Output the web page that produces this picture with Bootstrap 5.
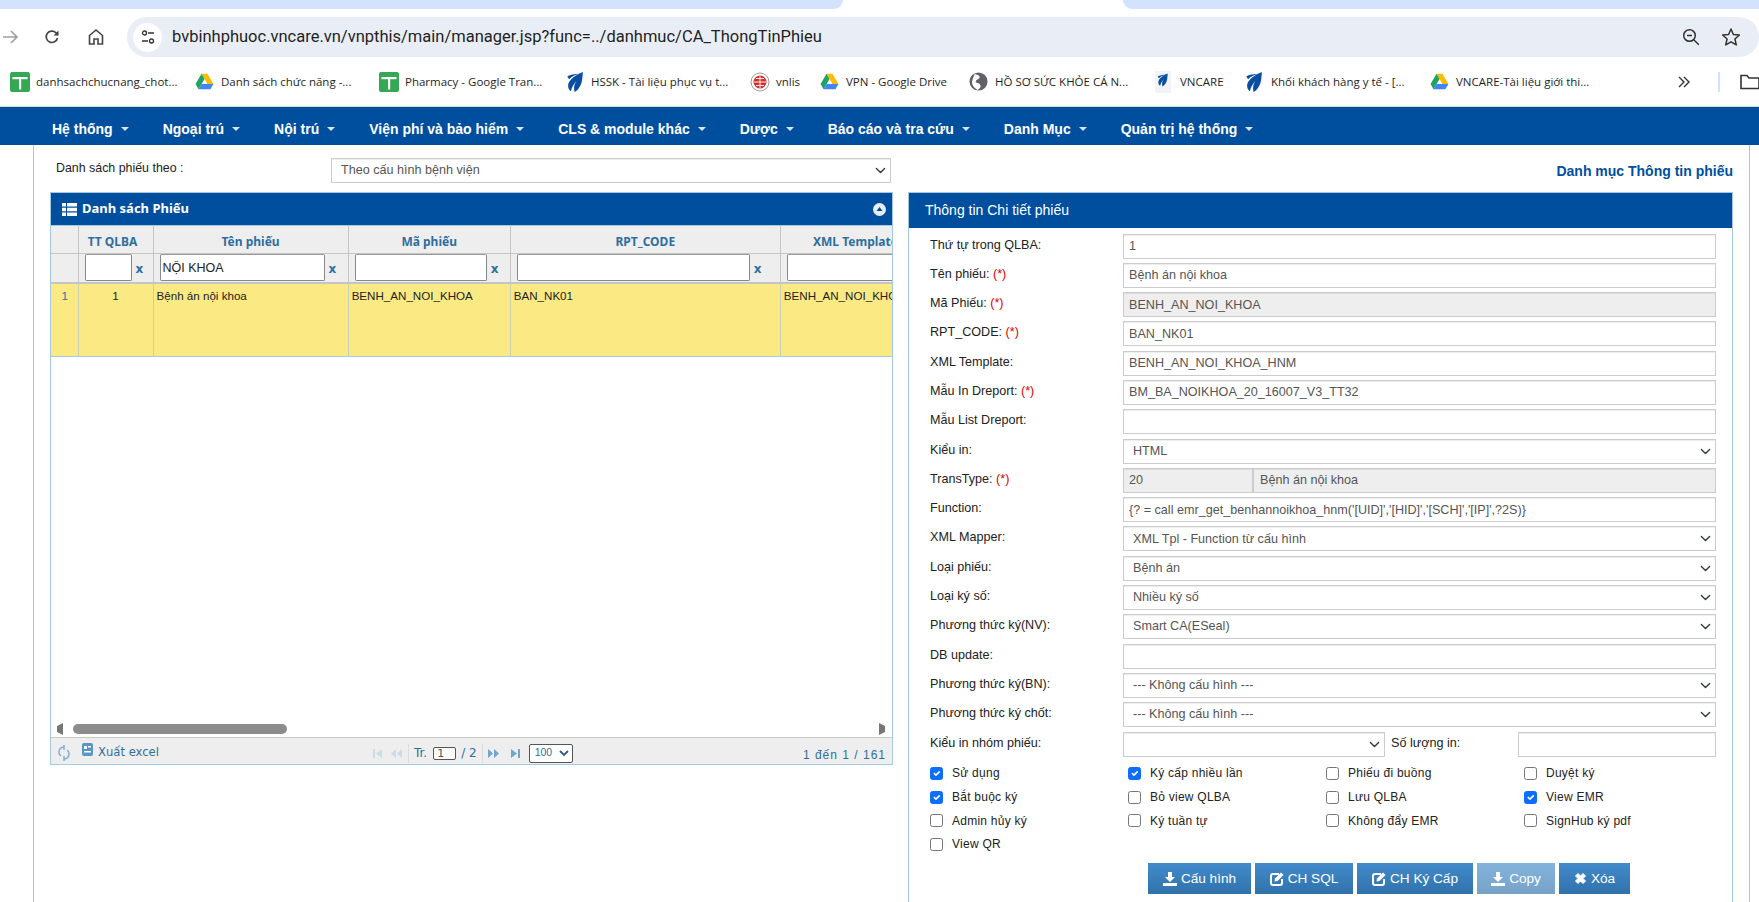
<!DOCTYPE html>
<html lang="vi">
<head>
<meta charset="utf-8">
<title>CA_ThongTinPhieu</title>
<link href="https://cdn.jsdelivr.net/npm/bootstrap@5.3.0/dist/css/bootstrap.min.css" rel="stylesheet">
<style>
html,body{height:902px;overflow:hidden;background:#fff}
body{font-family:"Liberation Sans",Arial,sans-serif;font-size:12px;color:#222}
.tabstrip-left{width:843px;background:#d3e3fd;border-radius:0 0 12px 0;height:9px}
.tabstrip-mid{width:280px;background:#fff;height:9px}
.tabstrip-right{flex:1;background:#d3e3fd;border-radius:0 0 0 12px;height:9px}
.tabwrap{display:flex;height:9px;background:#fff}
.toolbar{height:48px;display:flex;align-items:flex-end;background:#fff}
.tool-ic{flex:none;display:flex;align-items:center;justify-content:center;height:40px}
.omni{flex:1;height:40px;margin-left:20px;background:#e9eef6;border-radius:20px;display:flex;align-items:center;padding:0 7px 0 6px;font-family:Roboto,"Liberation Sans",sans-serif;font-size:16.5px;color:#1f1f1f}
.omni-tune{width:29px;height:29px;background:#fff;border-radius:50%;display:flex;align-items:center;justify-content:center;margin-right:10px}
.bmbar{height:50px;display:flex;align-items:center;background:#fff;border-bottom:1px solid #d5d5d5;font-family:"Open Sans",Roboto,sans-serif;font-size:11.5px;color:#1f1f1f;white-space:nowrap;padding-left:10px}
.bmk{display:flex;align-items:center;flex:none}
.bmk svg{flex:none}
.bmk span{margin-left:6px;display:block}
.bmend{margin-left:auto;display:flex;align-items:center}
.topnav{height:38px;background:#004f9f;padding:6px 0 0 34px;flex-wrap:nowrap;justify-content:flex-start}
.topnav .navbar-nav .nav-link{color:#fff;font-weight:700;font-size:14px;padding:0 16.500px 0 17.500px;display:flex;align-items:center;white-space:nowrap}
.topnav .navbar-nav .nav-item:first-child .nav-link{padding-left:18px}
.nav-caret{display:inline-block;width:0;height:0;border-left:4px solid transparent;border-right:4px solid transparent;border-top:4px solid #fff;margin-left:8px;opacity:.85}
.pagebox{margin:0 9px 0 33px;height:757px;border-left:1px solid #a6c9e2;border-right:1px solid #a6c9e2;padding-top:13px;display:flex;gap:15px;overflow:hidden}
.leftcol{width:843px;margin-left:16px;flex:none}
.rightcol{width:825px;flex:none}
.filterbar{display:flex;height:25px;margin-bottom:9px;padding-right:2px}
.filterbar label{width:281px;padding:1px 0 0 6px;line-height:19px;flex:none;color:#222;font-size:12.400px}
.sel{height:25px;border:1px solid #ccc;border-radius:0;font-size:12.600px;padding:0 24px 0 9px;color:#555;background-position:right 3px center;background-size:13px 11px;box-shadow:inset 0 1px 1px rgba(0,0,0,.075);font-family:"Liberation Sans",sans-serif}
.inp{height:25px;border:1px solid #ccc;border-radius:0;font-size:12.600px;padding:0 5px;color:#555;box-shadow:inset 0 1px 1px rgba(0,0,0,.075);font-family:"Liberation Sans",sans-serif}
.inp:disabled,.inp[readonly]{background:#eee;opacity:1}
.gridpanel{height:573px;border:1px solid #a6c9e2;display:flex;flex-direction:column;overflow:hidden}
.phead{height:32px;background:#004f9f;color:#fff;display:flex;align-items:center;flex:none;font-size:13px;font-weight:700;padding:0 6px 0 11px;font-family:"Noto Sans","Liberation Sans",sans-serif}
.phead svg{margin-right:5px}
.gridview{flex:1;overflow:hidden;background:#fff;position:relative}
.gridtbl{table-layout:fixed;width:880px;border-collapse:collapse;margin:0;font-size:11.600px}
.gridtbl th,.gridtbl td{border:1px solid #c5c5c5;border-width:0 1px 0 0;padding:0;overflow:hidden;white-space:nowrap}
.gridtbl thead tr.hrow th{height:28px;padding-bottom:2px;background:#eee;color:#2e6e9e;font-weight:700;text-align:center;border-top:1px solid #a6c9e2;border-bottom:1px solid #c5c5c5;font-family:"Noto Sans","Liberation Sans",sans-serif;font-size:12px}
.gridtbl thead tr.hrow th:nth-child(2){padding-right:6px}
.gridtbl thead tr.frow th{height:29px;background:#eee;font-weight:400;border-bottom:2px solid #c5c5c5}
.filtcell{display:flex;align-items:flex-start;padding:0 0 0 6px;color:#2e6e9e;font-weight:700;font-size:12.500px;height:28px}
.filtcell input{min-width:0;height:27px;border:1px solid #888;border-top-color:#999;border-width:1px 1.500px 1.500px 1.500px;padding:0 2px;font-size:12.500px;color:#222;background:#fff;font-family:"Liberation Sans",sans-serif;border-radius:2px}
.filtcell b{flex:1;text-align:left;padding-left:4px;line-height:30px;font-family:"DejaVu Sans",sans-serif;font-size:12px}
.gridtbl .frow th:nth-child(2) input{width:47px}
.gridtbl .frow th:nth-child(3) input{width:165px}
.gridtbl .frow th:nth-child(4) input{width:132px}
.gridtbl .frow th:nth-child(5) input{width:233px}
.gridtbl .frow th:nth-child(6) input{width:140px}
.gridtbl tbody td{height:73px;background:#fbe983;color:#222;vertical-align:top;padding:3px 3px;border-bottom:1px solid #a6c9e2;border-right-color:#c8d0b8}
.gridtbl tbody td.rn{color:#2e6e9e;text-align:center;padding-left:4px}
.gridtbl tbody td.ct{text-align:center}
.hscroll{height:15px;flex:none;display:flex;align-items:center;padding:0 6px 2px 5px;background:#fff;gap:9px}
.hthumb{width:214px;height:10px;border-radius:5px;background:#8c8c8c}
.hspacer{flex:1}
.pfoot{height:27px;flex:none;background:#eee;border-top:1px solid #c8c8c8;display:flex;align-items:center;padding:4px 6px 0 7px;color:#2e6e9e;font-family:"DejaVu Sans",sans-serif;font-size:11px}
.pfoot .xl{margin-left:5px;font-size:11.600px}
.pager{margin-left:212px;display:flex;align-items:center;gap:3px;font-size:12px}
.pager .pginp{width:23px;height:13px;border:1px solid #555;border-radius:2px;background:#fff;color:#555;font-size:11px;line-height:11px;padding-left:3px;margin:0 2px 0 3px}
.pager .pgsel{height:19px;width:44px;border:1px solid #555;border-radius:2px;background:#fff;color:#2e6e9e;display:flex;align-items:center;justify-content:space-between;padding:0 3px 0 5px;font-size:10.500px;margin-left:5px;font-family:"Liberation Sans",sans-serif}
.pager .vsep{width:1px;height:19px;background:#dcdcdc;margin:0 2px}
.recs{margin-left:auto;font-size:12px;letter-spacing:1px;font-family:"Liberation Sans",sans-serif;padding-top:3px}
.titlebar{height:25px;margin-bottom:9px;text-align:right;font-weight:700;color:#004f9f;font-size:14px;line-height:27px}
.detailpanel{height:740px;border:1px solid #a6c9e2;display:flex;flex-direction:column}
.dhead{height:35px;background:#004f9f;color:#fff;font-size:14px;display:flex;align-items:center;padding-left:16px;flex:none}
.formgrid{padding:5.500px 16px 0 21px;display:grid;grid-template-columns:193px 1fr;row-gap:4.300px;align-items:start}
.formgrid label{line-height:23px;color:#222;height:25px;font-size:12.600px}
.req{color:#e00000}
.dual{display:flex}
.dual .inp:first-child{width:131px;flex:none;border-right-width:2px}
.dual .inp:last-child{flex:1;min-width:0;padding-left:6px;border-left:0}
.nums{display:flex;align-items:flex-start}
.nums .form-select{width:262px;flex:none}
.nums label{width:133px;flex:none;padding-left:6px}
.checks{padding:5px 0 0 21px;display:grid;grid-template-columns:repeat(4,198px);grid-auto-rows:23.700px;align-items:center}
.checks .chk{display:flex;align-items:center;margin:0;padding:0;min-height:0;letter-spacing:.25px;color:#222}
.checks .chk .form-check-input{width:13px;height:13px;margin:0 9px 0 0;float:none;border-color:#767676;border-radius:2.500px;flex:none}
.checks .chk .form-check-input:checked{border-color:#0d6efd}
.actions{display:flex;gap:4px;padding-left:239px;margin-top:7px}
.actbtn{height:31px;border-radius:0;border:0;background:linear-gradient(#428bca,#3072ab);color:#fff;font-size:13.600px;padding:0;display:flex;align-items:center;justify-content:center;gap:4px}
.actbtn:disabled{opacity:.65;background:linear-gradient(#428bca,#3072ab);color:#fff}
.w1{width:103px}.w2{width:98px}.w3{width:116px}.w4{width:78px}.w5{width:71px}
</style>
</head>
<body>
<svg width="0" height="0" class="d-block" style="position:absolute">
<defs>
<symbol id="sheet" viewBox="0 0 20 20"><rect width="20" height="20" rx="2" fill="#34a853"/><rect x="2.500" y="5" width="15" height="2.200" fill="#fff"/><rect x="9" y="5" width="2.200" height="12.500" fill="#fff"/></symbol>
<symbol id="drive" viewBox="0 0 22 20"><path d="M7.500 1h7l7 12h-7z" fill="#fbbc04"/><path d="M7.500 1 .5 13l3.500 6 7-12z" fill="#1ea362"/><path d="M4 19l3.500-6h14L18 19z" fill="#4285f4"/></symbol>
<symbol id="vnpt" viewBox="0 0 20 24"><path d="M18 1C13 3 6 7 3 12c-2 4-1 8 2 10 1-4 3-8 6-11-3 4-3 8-2 12 4-2 7-7 8-12 .5-3 1-7 1-10z" fill="#0a4ea3"/><path d="M1 6c3-2 8-3 14-3-5 1-9 3-12 6z" fill="#0a4ea3"/></symbol>
</defs>
</svg>

<div class="tabwrap"><div class="tabstrip-left"></div><div class="tabstrip-mid"></div><div class="tabstrip-right"></div></div>

<div class="toolbar">
  <div class="tool-ic" style="width:20px"><svg width="20" height="20" viewBox="0 0 20 20"><path d="M3 10h14M11 4l6 6-6 6" fill="none" stroke="#9aa0a6" stroke-width="1.600"/></svg></div>
  <div class="tool-ic" style="width:64px"><svg width="20" height="20" viewBox="0 0 20 20"><path d="M15.500 11a5.700 5.700 0 1 1-1.500-5.200L16 8" fill="none" stroke="#444" stroke-width="1.700"/><path d="M16.500 3.500V8.600h-5z" fill="#444"/></svg></div>
  <div class="tool-ic" style="width:23px"><svg width="20" height="20" viewBox="0 0 20 20"><path d="M3.500 17V8.500L10 3l6.500 5.500V17h-4.500v-5H8v5z" fill="none" stroke="#444" stroke-width="1.600"/></svg></div>
  <div class="omni">
    <div class="omni-tune"><svg width="16" height="16" viewBox="0 0 16 16"><circle cx="4.500" cy="4" r="2" fill="none" stroke="#333" stroke-width="1.300"/><path d="M8 4h6M2 12h6" stroke="#333" stroke-width="1.300"/><circle cx="11.500" cy="12" r="2" fill="none" stroke="#333" stroke-width="1.300"/></svg></div>
    <span>bvbinhphuoc.vncare.vn/vnpthis/main/manager.jsp?func=../danhmuc/CA_ThongTinPhieu</span>
    <svg class="ms-auto" width="20" height="20" viewBox="0 0 20 20"><circle cx="8.500" cy="8.500" r="5.800" fill="none" stroke="#333" stroke-width="1.500"/><path d="M6 8.500h5M12.800 12.800l5 5" stroke="#333" stroke-width="1.500"/></svg>
    <svg style="margin-left:20px;margin-right:11px" width="20" height="20" viewBox="0 0 20 20"><path d="M10 2l2.400 5.500 6 .5-4.500 4 1.400 5.900L10 14.800l-5.300 3.100 1.400-5.900-4.500-4 6-.5z" fill="none" stroke="#333" stroke-width="1.500" stroke-linejoin="round"/></svg>
  </div>
</div>

<div class="bmbar">
  <div class="bmk" style="width:185px"><svg width="20" height="20"><use href="#sheet"/></svg><span>danhsachchucnang_chot...</span></div>
  <div class="bmk" style="width:184px"><svg width="19" height="17"><use href="#drive"/></svg><span style="margin-left:7px">Danh sách chức năng -...</span></div>
  <div class="bmk" style="width:187px"><svg width="20" height="20"><use href="#sheet"/></svg><span>Pharmacy - Google Tran...</span></div>
  <div class="bmk" style="width:184px"><svg width="19" height="22"><use href="#vnpt"/></svg><span>HSSK - Tài liệu phục vụ t...</span></div>
  <div class="bmk" style="width:70px"><svg width="20" height="20" viewBox="0 0 20 20"><circle cx="10" cy="10" r="9" fill="#fff" stroke="#999"/><circle cx="10" cy="10" r="6.500" fill="#d32f2f"/><path d="M10 4v12M4 10h12M6 6.500h8M6 13.500h8" stroke="#fff" stroke-width=".9"/></svg><span>vnlis</span></div>
  <div class="bmk" style="width:149px"><svg width="19" height="17"><use href="#drive"/></svg><span style="margin-left:7px">VPN - Google Drive</span></div>
  <div class="bmk" style="width:186px"><svg width="19" height="19" viewBox="0 0 20 20"><circle cx="10" cy="10" r="9.500" fill="#5f6368"/><path d="M6 2c3 1 6 2 5 4S7 8 7 10s4 1 5 4-2 4-3 5c-2-1-4-3-5-5s-1-4 0-7z" fill="#fff"/></svg><span style="margin-left:7px">HỒ SƠ SỨC KHỎE CÁ N...</span></div>
  <div class="bmk" style="width:90px"><svg width="16" height="22"><rect width="16" height="22" fill="#f1f3f6"/><use href="#vnpt" width="14" height="14" x="1" y="2"/></svg><span style="margin-left:9px">VNCARE</span></div>
  <div class="bmk" style="width:185px"><svg width="19" height="22"><use href="#vnpt"/></svg><span style="margin-left:7px">Khối khách hàng y tế - [...</span></div>
  <div class="bmk"><svg width="19" height="17"><use href="#drive"/></svg><span style="margin-left:7px">VNCARE-Tài liệu giới thi...</span></div>
  <div class="bmend">
    <svg width="14" height="14" viewBox="0 0 14 14"><path d="M2 2l5 5-5 5M7 2l5 5-5 5" fill="none" stroke="#333" stroke-width="1.400"/></svg>
    <div style="width:2px;height:20px;background:#d3e3fd;margin:0 20px 0 27px"></div>
    <svg width="20" height="18" viewBox="0 0 20 18" style="margin-right:-1px"><path d="M1 15.500V2.500h6l2 2.500h10v10.500z" fill="none" stroke="#333" stroke-width="1.600"/></svg>
  </div>
</div>

<nav class="navbar navbar-expand topnav">
  <ul class="navbar-nav">
    <li class="nav-item"><a class="nav-link" href="#">Hệ thống<i class="nav-caret"></i></a></li>
    <li class="nav-item"><a class="nav-link" href="#">Ngoại trú<i class="nav-caret"></i></a></li>
    <li class="nav-item"><a class="nav-link" href="#">Nội trú<i class="nav-caret"></i></a></li>
    <li class="nav-item"><a class="nav-link" href="#">Viện phí và bảo hiểm<i class="nav-caret"></i></a></li>
    <li class="nav-item"><a class="nav-link" href="#">CLS &amp; module khác<i class="nav-caret"></i></a></li>
    <li class="nav-item"><a class="nav-link" href="#">Dược<i class="nav-caret"></i></a></li>
    <li class="nav-item"><a class="nav-link" href="#">Báo cáo và tra cứu<i class="nav-caret"></i></a></li>
    <li class="nav-item"><a class="nav-link" href="#">Danh Mục<i class="nav-caret"></i></a></li>
    <li class="nav-item"><a class="nav-link" href="#">Quản trị hệ thống<i class="nav-caret"></i></a></li>
  </ul>
</nav>

<div class="pagebox">
  <div class="leftcol">
    <div class="filterbar">
      <label>Danh sách phiếu theo :</label>
      <select class="form-select sel"><option>Theo cấu hình bệnh viện</option></select>
    </div>
    <div class="gridpanel">
      <div class="phead">
        <svg width="15" height="13" viewBox="0 0 15 13"><path d="M0 0h4v3.500H0zM5 0h10v3.500H5zM0 4.700h4v3.600H0zM5 4.700h10v3.600H5zM0 9.500h4V13H0zM5 9.500h10V13H5z" fill="#fff"/></svg>
        <span>Danh sách Phiếu</span>
        <svg class="ms-auto" style="margin-right:0" width="13" height="13" viewBox="0 0 13 13"><circle cx="6.500" cy="6.500" r="6.500" fill="#e8eef5"/><path d="M3.500 8h6l-3-4z" fill="#004f9f"/></svg>
      </div>
      <div class="gridview">
        <table class="table gridtbl">
          <colgroup><col style="width:27px"><col style="width:75px"><col style="width:195px"><col style="width:162px"><col style="width:270px"><col style="width:150px"></colgroup>
          <thead>
            <tr class="hrow"><th></th><th>TT QLBA</th><th>Tên phiếu</th><th>Mã phiếu</th><th>RPT_CODE</th><th>XML Template</th></tr>
            <tr class="frow">
              <th></th>
              <th><div class="filtcell"><input type="text" aria-label="TT QLBA"><b>x</b></div></th>
              <th><div class="filtcell"><input type="text" value="NỘI KHOA" aria-label="Tên phiếu"><b>x</b></div></th>
              <th><div class="filtcell"><input type="text" aria-label="Mã phiếu"><b>x</b></div></th>
              <th><div class="filtcell"><input type="text" aria-label="RPT_CODE"><b>x</b></div></th>
              <th><div class="filtcell"><input type="text" aria-label="XML Template"><b>x</b></div></th>
            </tr>
          </thead>
          <tbody>
            <tr><td class="rn">1</td><td class="ct">1</td><td>Bệnh án nội khoa</td><td>BENH_AN_NOI_KHOA</td><td>BAN_NK01</td><td>BENH_AN_NOI_KHOA_HNM</td></tr>
          </tbody>
        </table>
      </div>
      <div class="hscroll">
        <svg width="8" height="12" viewBox="0 0 8 12"><path d="M7 0v12L1 9V3z" fill="#777"/></svg>
        <div class="hthumb"></div><div class="hspacer"></div>
        <svg width="8" height="12" viewBox="0 0 8 12"><path d="M1 0v12l6-3V3z" fill="#777"/></svg>
      </div>
      <div class="pfoot">
        <svg width="12" height="16" viewBox="0 0 12 16"><path d="M6 2a5 5 0 0 0-3 9M6 14a5 5 0 0 0 3-9M6 0v5M6 11v5" fill="none" stroke="#7fb0d6" stroke-width="1.500"/></svg>
        <svg style="margin:-6px 0 0 12px" width="11" height="14" viewBox="0 0 11 14"><rect width="11" height="13" rx="2" fill="#5b95c6"/><rect x="2" y="3" width="3" height="3" fill="#fff"/><rect x="6" y="3" width="3" height="1.500" fill="#fff"/><rect x="2" y="8" width="7" height="1.500" fill="#fff"/></svg>
        <span class="xl">Xuất excel</span>
        <div class="pager">
          <svg width="12" height="9" viewBox="0 0 12 9"><path d="M2 0h2v9H2zM11 0v9L5 4.500z" fill="#c9dcea"/></svg>
          <svg style="margin-left:4px" width="13" height="9" viewBox="0 0 13 9"><path d="M6 0v9L1 4.500zM12 0v9L7 4.500z" fill="#c9dcea"/></svg>
          <div class="vsep"></div>
          <span>Tr.</span><span class="pginp">1</span><span>/ 2</span>
          <div class="vsep"></div>
          <svg width="12" height="9" viewBox="0 0 12 9"><path d="M0 0v9l5-4.500zM6 0v9l5-4.500z" fill="#6fa5cf"/></svg>
          <svg style="margin-left:8px" width="10" height="9" viewBox="0 0 10 9"><path d="M0 0v9l6-4.500zM7 0h2v9H7z" fill="#6fa5cf"/></svg>
          <div class="pgsel"><span>100</span><svg width="10" height="7" viewBox="0 0 10 7"><path d="M1 1l4 4 4-4" fill="none" stroke="#2e5f86" stroke-width="1.800"/></svg></div>
        </div>
        <span class="recs">1 đến 1 / 161</span>
      </div>
    </div>
  </div>

  <div class="rightcol">
    <div class="titlebar">Danh mục Thông tin phiếu</div>
    <div class="detailpanel">
      <div class="dhead">Thông tin Chi tiết phiếu</div>
      <div class="formgrid">
        <label>Thứ tự trong QLBA:</label><input class="form-control inp" value="1">
        <label>Tên phiếu: <span class="req">(*)</span></label><input class="form-control inp" value="Bệnh án nội khoa">
        <label>Mã Phiếu: <span class="req">(*)</span></label><input class="form-control inp" value="BENH_AN_NOI_KHOA" disabled>
        <label>RPT_CODE: <span class="req">(*)</span></label><input class="form-control inp" value="BAN_NK01">
        <label>XML Template:</label><input class="form-control inp" value="BENH_AN_NOI_KHOA_HNM">
        <label>Mẫu In Dreport: <span class="req">(*)</span></label><input class="form-control inp" value="BM_BA_NOIKHOA_20_16007_V3_TT32">
        <label>Mẫu List Dreport:</label><input class="form-control inp">
        <label>Kiểu in:</label><select class="form-select sel"><option>HTML</option></select>
        <label>TransType: <span class="req">(*)</span></label><div class="dual"><input class="form-control inp" value="20" disabled><input class="form-control inp" value="Bệnh án nội khoa" disabled></div>
        <label>Function:</label><input class="form-control inp" value="{? = call emr_get_benhannoikhoa_hnm('[UID]','[HID]','[SCH]','[IP]',?2S)}">
        <label>XML Mapper:</label><select class="form-select sel"><option>XML Tpl - Function từ cấu hình</option></select>
        <label>Loại phiếu:</label><select class="form-select sel"><option>Bệnh án</option></select>
        <label>Loại ký số:</label><select class="form-select sel"><option>Nhiều ký số</option></select>
        <label>Phương thức ký(NV):</label><select class="form-select sel"><option>Smart CA(ESeal)</option></select>
        <label>DB update:</label><input class="form-control inp">
        <label>Phương thức ký(BN):</label><select class="form-select sel"><option>--- Không cấu hình ---</option></select>
        <label>Phương thức ký chốt:</label><select class="form-select sel"><option>--- Không cấu hình ---</option></select>
        <label>Kiểu in nhóm phiếu:</label><div class="nums"><select class="form-select sel"><option></option></select><label>Số lượng in:</label><input class="form-control inp"></div>
      </div>
      <div class="checks">
        <label class="form-check chk"><input class="form-check-input" type="checkbox" checked>Sử dụng</label>
        <label class="form-check chk"><input class="form-check-input" type="checkbox" checked>Ký cấp nhiều lần</label>
        <label class="form-check chk"><input class="form-check-input" type="checkbox">Phiếu đi buồng</label>
        <label class="form-check chk"><input class="form-check-input" type="checkbox">Duyệt ký</label>
        <label class="form-check chk"><input class="form-check-input" type="checkbox" checked>Bắt buộc ký</label>
        <label class="form-check chk"><input class="form-check-input" type="checkbox">Bỏ view QLBA</label>
        <label class="form-check chk"><input class="form-check-input" type="checkbox">Lưu QLBA</label>
        <label class="form-check chk"><input class="form-check-input" type="checkbox" checked>View EMR</label>
        <label class="form-check chk"><input class="form-check-input" type="checkbox">Admin hủy ký</label>
        <label class="form-check chk"><input class="form-check-input" type="checkbox">Ký tuần tự</label>
        <label class="form-check chk"><input class="form-check-input" type="checkbox">Không đẩy EMR</label>
        <label class="form-check chk"><input class="form-check-input" type="checkbox">SignHub ký pdf</label>
        <label class="form-check chk"><input class="form-check-input" type="checkbox">View QR</label>
      </div>
      <div class="actions">
        <button class="btn actbtn w1"><svg width="14" height="14" viewBox="0 0 14 14"><path d="M5 0h4v5h3L7 10 2 5h3zM0 11h14v3H0z" fill="#fff"/></svg>Cấu hình</button>
        <button class="btn actbtn w2"><svg width="14" height="14" viewBox="0 0 14 14"><path d="M9 2H3a2 2 0 0 0-2 2v7a2 2 0 0 0 2 2h7a2 2 0 0 0 2-2V7" fill="none" stroke="#fff" stroke-width="2"/><path d="M5 6.500L11 .5l2.500 2.500-6 6L4.500 9.500z" fill="#fff"/></svg>CH SQL</button>
        <button class="btn actbtn w3"><svg width="14" height="14" viewBox="0 0 14 14"><path d="M9 2H3a2 2 0 0 0-2 2v7a2 2 0 0 0 2 2h7a2 2 0 0 0 2-2V7" fill="none" stroke="#fff" stroke-width="2"/><path d="M5 6.500L11 .5l2.500 2.500-6 6L4.500 9.500z" fill="#fff"/></svg>CH Ký Cấp</button>
        <button class="btn actbtn w4" disabled><svg width="14" height="14" viewBox="0 0 14 14"><path d="M5 0h4v5h3L7 10 2 5h3zM0 11h14v3H0z" fill="#fff"/></svg>Copy</button>
        <button class="btn actbtn w5"><svg width="13" height="13" viewBox="0 0 13 13"><path d="M1.500 4L4 1.500l2.500 2.500L9 1.500 11.500 4 9 6.500l2.500 2.500L9 11.500 6.500 9 4 11.500 1.500 9 4 6.500z" fill="#fff" stroke="#fff"/></svg>Xóa</button>
      </div>
    </div>
  </div>
</div>
</body>
</html>
